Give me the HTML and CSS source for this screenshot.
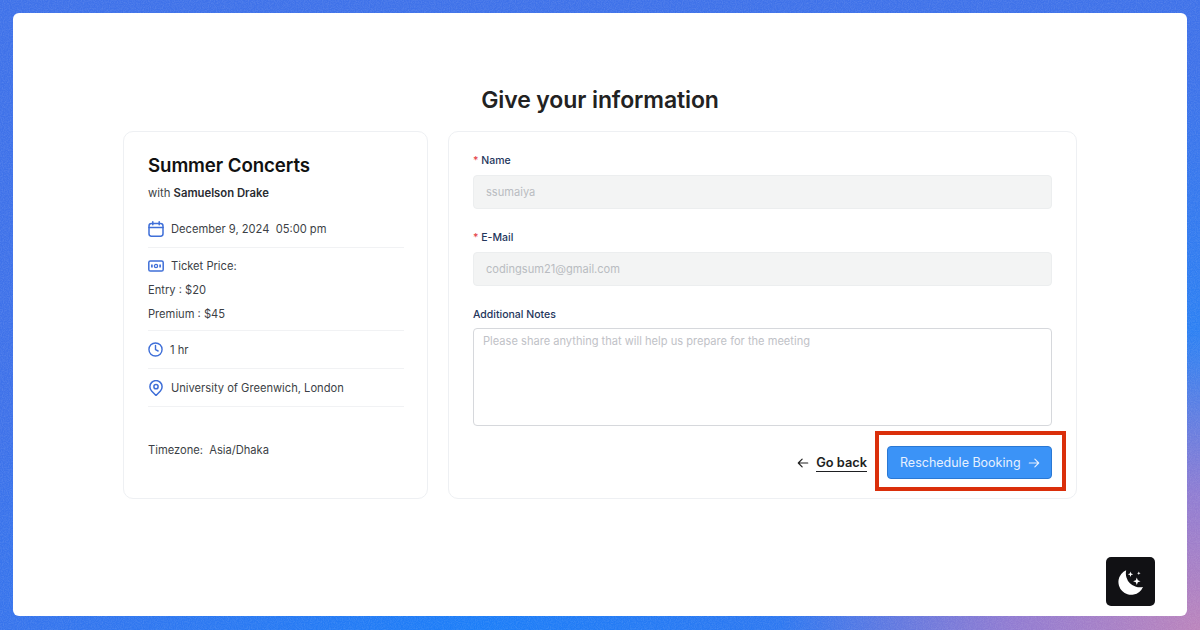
FILE: index.html
```html
<!DOCTYPE html>
<html lang="en">
<head>
<meta charset="utf-8">
<title>Give your information</title>
<link rel="stylesheet" href="styles.css">
</head>
<body>
<svg class="grain" width="1200" height="630" aria-hidden="true">
  <filter id="noise"><feTurbulence type="fractalNoise" baseFrequency="0.85" numOctaves="2" seed="4"/><feColorMatrix type="matrix" values="0 0 0 0 1  0 0 0 0 1  0 0 0 0 1  1.6 0 0 0 -0.55"/></filter>
  <rect width="1200" height="630" filter="url(#noise)"/>
</svg>
<main class="panel">
  <h1 class="title">Give your information</h1>
  <div class="columns">
    <aside class="card summary">
      <h2 class="event">Summer Concerts</h2>
      <p class="host">with <strong>Samuelson Drake</strong></p>
      <div class="row row-date">
        <svg class="icon" viewBox="0 0 16 16" fill="none" stroke="#3f6fd8" stroke-width="1.5" stroke-linecap="round"><rect x="1" y="2.6" width="14" height="12.6" rx="2.4"/><path d="M1 6.4h14M4.8 .8v3M11.2 .8v3"/></svg>
        <span>December 9, 2024&nbsp; 05:00 pm</span>
      </div>
      <div class="price">
        <div class="price-head">
          <svg class="icon icon-wide" viewBox="0 0 16 12" fill="none" stroke="#3f6fd8" stroke-width="1.5"><rect x=".8" y="1" width="14.4" height="10" rx="1.6"/><circle cx="8" cy="6" r="1.6" stroke-width="1.3"/><path d="M3.9 4.5v3M12.1 4.5v3" stroke-width="1.7"/></svg>
          <span>Ticket Price:</span>
        </div>
        <p>Entry : $20</p>
        <p>Premium : $45</p>
      </div>
      <div class="row row-time">
        <svg class="icon icon-clock" viewBox="0 0 16 16" fill="none" stroke="#3f6fd8" stroke-width="1.5" stroke-linecap="round" stroke-linejoin="round"><circle cx="8" cy="8" r="7"/><path d="M8 3.8v4.4l2.8 1.4"/></svg>
        <span>1 hr</span>
      </div>
      <div class="row row-place">
        <svg class="icon" viewBox="0 0 16 16" fill="none" stroke="#3f6fd8" stroke-width="1.5" stroke-linejoin="round"><path d="M8 15.4 3.6 10.9A6.1 6.1 0 0 1 1.9 6.7 6.1 6.1 0 0 1 14.1 6.7a6.1 6.1 0 0 1-1.7 4.2Z"/><circle cx="8" cy="6.7" r="2.1"/></svg>
        <span>University of Greenwich, London</span>
      </div>
      <p class="zone">Timezone:&nbsp; Asia/Dhaka</p>
    </aside>
    <form class="card form">
      <div class="field">
        <label class="label"><span class="req">*</span> Name</label>
        <div class="input">ssumaiya</div>
      </div>
      <div class="field field-mail">
        <label class="label"><span class="req">*</span> E-Mail</label>
        <div class="input">codingsum21@gmail.com</div>
      </div>
      <div class="field field-notes">
        <label class="label">Additional Notes</label>
        <div class="notes">Please share anything that will help us prepare for the meeting</div>
      </div>
      <div class="actions">
        <a class="back">
          <svg class="arrow" viewBox="0 0 14 14" fill="none" stroke="#222" stroke-width="1.4" stroke-linecap="round" stroke-linejoin="round"><path d="M12.5 7h-11M6 2.5 1.5 7 6 11.5"/></svg>
          <span class="back-text">Go back</span>
        </a>
        <div class="submit-wrap">
          <button class="submit" type="button">Reschedule Booking
            <svg class="arrow" viewBox="0 0 14 14" fill="none" stroke="#e6f0ff" stroke-width="1.3" stroke-linecap="round" stroke-linejoin="round"><path d="M1.5 7h11M8 2.5 12.5 7 8 11.5"/></svg>
          </button>
          <div class="highlight"></div>
        </div>
      </div>
    </form>
  </div>
  <button class="theme" type="button" aria-label="Toggle theme">
    <svg viewBox="0 0 28 28" width="28" height="28" fill="#fff"><path d="M9.2 2.2A12.8 12.8 0 1 0 26 19 14 14 0 0 1 9.2 2.2Z"/><path d="M19.8 9.6l1 2.7 2.7 1-2.7 1-1 2.7-1-2.7-2.7-1 2.7-1ZM13.5 3.6l.7 2 2 .7-2 .7-.7 2-.7-2-2-.7 2-.7ZM21.8 3.5l.5 1.3 1.3.5-1.3.5-.5 1.3-.5-1.3-1.3-.5 1.3-.5Z"/></svg>
  </button>
</main>
</body>
</html>
```
FILE: styles.css
```css
* { box-sizing: border-box; }
html, body { height: 100%; }
body {
  margin: 0;
  padding: 13px 13px 14px;
  overflow: hidden;
  font-family: Inter, "Liberation Sans", sans-serif;
  background:
    radial-gradient(420px 300px at 100% 100%, #bb84bc 0%, rgba(160,125,205,.85) 45%, rgba(90,120,230,0) 100%),
    radial-gradient(600px 330px at 40% 100%, #1c7ef8 0%, rgba(28,126,248,0) 100%),
    radial-gradient(300px 300px at 100% 58%, #2a82f4 0%, rgba(42,130,244,0) 100%),
    #3f72e9;
}
.grain {
  position: absolute;
  left: 0;
  top: 0;
  opacity: .13;
}
.panel {
  position: relative;
  height: 603px;
  background: #fff;
  border-radius: 6px;
  padding-top: 72px;
}
.title {
  margin: 0 0 16px;
  text-align: center;
  font-size: 23px;
  line-height: 30px;
  font-weight: 600;
  letter-spacing: -.1px;
  color: #222;
}
.columns {
  display: flex;
  gap: 20px;
  margin: 0 110px;
  height: 368px;
}
.card {
  background: #fff;
  border: 1px solid #eef0f3;
  border-radius: 10px;
}
.summary {
  width: 305px;
  padding: 22px 23px 0 24px;
  font-size: 11.15px;
  color: #3c3f46;
}
.event {
  margin: 0;
  font-size: 18.7px;
  line-height: 24px;
  font-weight: 600;
  letter-spacing: -.1px;
  color: #111;
}
.host {
  margin: 6px 0 0;
  line-height: 18px;
  font-size: 11.3px;
}
.host strong { font-weight: 600; color: #2a2c31; }
.row {
  display: flex;
  align-items: center;
  gap: 7px;
  height: 38px;
  border-bottom: 1px solid #f1f2f4;
}
.row-date { margin-top: 8px; }
.icon { width: 16px; height: 16px; flex: none; }
.icon-wide { height: 12px; }
.icon-clock { width: 15px; height: 15px; }
.price { border-bottom: 1px solid #f1f2f4; padding: 9px 0 7px; }
.price-head { display: flex; align-items: center; gap: 7px; height: 18px; }
.price p { margin: 6px 0 0; line-height: 18px; }
.zone { margin: 34px 0 0; line-height: 18px; }
.form {
  flex: 1;
  padding: 20px 24px 0;
}
.field { margin-bottom: 20px; }
.label {
  display: block;
  font-size: 10.5px;
  line-height: 18px;
  font-weight: 500;
  color: #24365c;
  margin-bottom: 5px;
}
.field-notes .label { margin-bottom: 4px; }
.req { color: #e5484d; }
.input {
  height: 34px;
  padding: 0 12px;
  background: #f3f4f4;
  border: 1px solid #eceeef;
  border-radius: 4px;
  font-size: 11.1px;
  line-height: 32px;
  color: #b9bcc1;
}
.notes {
  height: 98px;
  padding: 4px 9px;
  border: 1px solid #d6d8dc;
  border-radius: 4px;
  font-size: 11.1px;
  line-height: 16px;
  color: #bfc2c7;
}
.actions {
  display: flex;
  justify-content: flex-end;
  align-items: center;
  gap: 20px;
}
.back {
  display: flex;
  align-items: center;
  gap: 7px;
  font-size: 12.8px;
  font-weight: 600;
  color: #1e1f22;
}
.back-text { border-bottom: 1px solid #1e1f22; line-height: 17px; }
.arrow { width: 12px; height: 12px; flex: none; }
.submit-wrap { position: relative; }
.submit {
  display: flex;
  align-items: center;
  gap: 7px;
  height: 33px;
  width: 165px;
  padding: 0 12px;
  background: #3b93f7;
  border: 1px solid #2a78d4;
  border-radius: 4px;
  font-family: inherit;
  font-size: 12.5px;
  white-space: nowrap;
  color: #e6f0ff;
}
.highlight {
  position: absolute;
  left: -12px;
  top: -15px;
  width: 191px;
  height: 60px;
  border: 4px solid #da2f0b;
}
.theme {
  position: absolute;
  left: 1093px;
  top: 544px;
  width: 49px;
  height: 49px;
  display: flex;
  align-items: center;
  justify-content: center;
  padding: 0;
  border: 0;
  border-radius: 5px;
  background: #111114;
}
```
